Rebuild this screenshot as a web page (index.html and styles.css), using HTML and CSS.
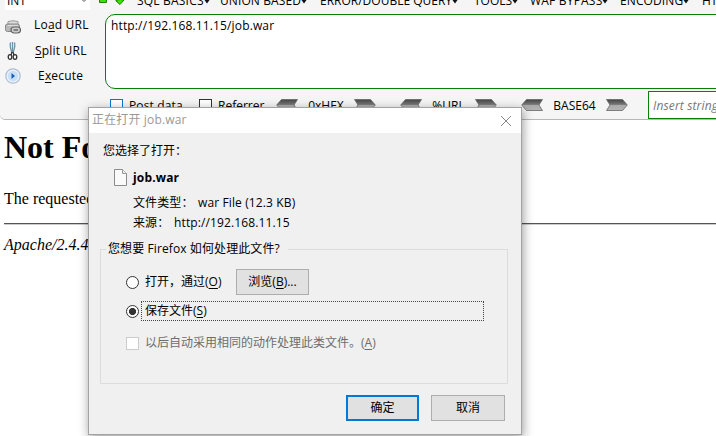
FILE: index.html
```html
<!DOCTYPE html>
<html lang="zh-CN">
<head>
<meta charset="utf-8">
<title>job.war</title>
<link rel="stylesheet" href="styles.css">
</head>
<body>
<svg class="defs" width="0" height="0" aria-hidden="true">
  <defs>
    <linearGradient id="steel" x1="0" y1="0" x2="0" y2="1">
      <stop offset="0" stop-color="#444"/><stop offset=".45" stop-color="#777"/><stop offset=".5" stop-color="#aaa"/><stop offset="1" stop-color="#b5b5b5"/>
    </linearGradient>
    <symbol id="left" viewBox="0 0 22 12"><path d="M.7 6 5.500.5H21.500L18 6l3.500 5.500H5.500z" fill="url(#steel)" stroke="#666" stroke-width=".8"/></symbol>
    <symbol id="right" viewBox="0 0 22 12"><path d="M21.300 6 16.500.5H.5L4 6 .5 11.500H16.500z" fill="url(#steel)" stroke="#666" stroke-width=".8"/></symbol>
    <symbol id="drop" viewBox="0 0 6 4"><path d="M.5 0H5.500L3 3.500z" fill="#111"/></symbol>
  </defs>
</svg>
<header class="hackbar">
  <nav class="menus">
    <div class="select"><span>INT</span><svg width="6" height="4" viewBox="0 0 6 4"><path d="M1 -.5 3 1.500 5 -.5" fill="none" stroke="#555"/></svg></div>
    <svg class="greens" width="30" height="8" viewBox="0 0 30 8"><path d="M1.500-2H8.500V2.500H1.500z" fill="#3be000" stroke="#267d09"/><path d="M20.500-2H24V0H26L22 4.500 18 1V0H20.500z" fill="#3be000" stroke="#267d09"/></svg>
    <span class="menu m1">SQL BASICS<svg><use href="#drop"/></svg></span>
    <span class="menu m2">UNION BASED<svg><use href="#drop"/></svg></span>
    <span class="menu m3">ERROR/DOUBLE QUERY<svg><use href="#drop"/></svg></span>
    <span class="menu m4">TOOLS<svg><use href="#drop"/></svg></span>
    <span class="menu m5">WAF BYPASS<svg><use href="#drop"/></svg></span>
    <span class="menu m6">ENCODING<svg><use href="#drop"/></svg></span>
    <span class="menu m7">HTML</span>
  </nav>
  <div class="work">
    <div class="actions">
      <div class="action">
        <svg width="16" height="16" viewBox="0 0 16 16"><path d="M3 7V3.500Q8 2 13 3.500V7" fill="#ddd" stroke="#999"/><rect x=".5" y="6" width="14" height="7.500" rx="2" fill="#b9b9b9" stroke="#888"/><path d="M3 7.500H13" stroke="#ddd"/><rect x="6" y="9" width="9.500" height="6" rx="3" fill="#ccc" stroke="#666" stroke-width="1.200"/><path d="M8.500 12h4.500" stroke="#666" stroke-width="1.400"/></svg>
        <span class="load">Lo<u>a</u>d URL</span>
      </div>
      <div class="action">
        <svg width="16" height="20" viewBox="0 0 16 20"><path d="M5.500 1.500Q4.500 6 7 11.500M7.500 1V11M9.500 1.500Q10.500 6 8 11.500" fill="none" stroke="#6994a5" stroke-width="1.300"/><g fill="none" stroke="#333" stroke-width="1.300"><path d="M7 11 6 14M8 11 9 14"/><ellipse cx="5" cy="16" rx="1.800" ry="2.300"/><ellipse cx="10" cy="16" rx="1.800" ry="2.300"/></g></svg>
        <span class="split"><u>S</u>plit URL</span>
      </div>
      <div class="action">
        <svg width="16" height="16" viewBox="0 0 16 16"><circle cx="8" cy="8" r="7.200" fill="#eaf2fc" stroke="#b0bfd5" stroke-width="1.300"/><circle cx="8" cy="8" r="5.200" fill="#c9dff7"/><path d="M6.500 5 10 8 6.500 11z" fill="#165fb8"/></svg>
        <span class="execute">E<u>x</u>ecute</span>
      </div>
    </div>
    <div class="url"><span>http://192.168.11.15/job.war</span></div>
  </div>
  <div class="tools">
    <i class="box blue"></i><span class="post">Post data</span>
    <i class="box"></i><span class="referrer">Referrer</span>
    <svg class="arrow first"><use href="#left"/></svg><span class="hex">0xHEX</span><svg class="arrow"><use href="#right"/></svg>
    <svg class="arrow second"><use href="#left"/></svg><span class="pct">%URL</span><svg class="arrow"><use href="#right"/></svg>
    <svg class="arrow third"><use href="#left"/></svg><span class="base">BASE64</span><svg class="arrow"><use href="#right"/></svg>
    <div class="insert">Insert string</div>
  </div>
</header>
<main class="page">
  <h1>Not Found</h1>
  <p>The requested URL</p>
  <hr>
  <address>Apache/2.4.4</address>
</main>
<section class="dialog">
  <div class="titlebar"><span>正在打开 job.war</span><svg width="12" height="12" viewBox="0 0 12 12"><path d="M1 1 11 11M11 1 1 11" stroke="#888" fill="none"/></svg></div>
  <div class="body">
    <div class="chosen">您选择了打开：</div>
    <div class="file"><svg width="13" height="17" viewBox="0 0 13 17"><path d="M.5 .5H8.500L12.500 4.500V16.500H.5z" fill="#fafafa" stroke="#8c8c8c"/><path d="M8.500 .5V4.500H12.500" fill="#eee" stroke="#999"/></svg><b>job.war</b></div>
    <div class="detail"><span class="type">文件类型：</span><span class="kind">war File (12.3 KB)</span></div>
    <div class="detail"><span class="source">来源：</span><span class="host">http://192.168.11.15</span></div>
    <fieldset>
      <legend>您想要 <span class="ff">Firefox</span> 如何处理此文件?</legend>
      <div class="option open"><i class="radio"></i><span class="label">打开，通过(<u>O</u>)</span><button class="browse">浏览(<u>B</u>)...</button></div>
      <div class="option save"><i class="radio on"></i><span class="focus">保存文件(<u>S</u>)</span></div>
      <div class="option auto"><i class="check"></i><span class="label">以后自动采用相同的动作处理此类文件。(<u>A</u>)</span></div>
    </fieldset>
    <div class="buttons"><button class="ok">确定</button><button>取消</button></div>
  </div>
</section>
</body>
</html>
```
FILE: styles.css
```css
* { box-sizing: border-box; }
body { margin: 0; width: 716px; height: 436px; overflow: hidden; position: relative; background: #fff; color: #000; font: 12px/16px "Open Sans", "Noto Sans CJK SC", sans-serif; }
.defs { position: absolute; }
svg { display: block; flex: none; }
u { text-underline-offset: 2px; text-decoration-thickness: 1px; }
span { white-space: nowrap; }

.hackbar { height: 120px; background: #f5f5f5; border-bottom: 1px solid #b7b7b7; border-bottom-left-radius: 5px; overflow: hidden; }
.menus { height: 14px; display: flex; align-items: flex-start; overflow: hidden; }
.menus span { margin-top: -7px; }
.select { flex: none; width: 85px; height: 10px; margin-left: 5px; padding: 0 3px 0 2px; display: flex; justify-content: space-between; background: #fff; overflow: hidden; }
.greens { margin: 0 0 0 8px; width: 30px; }
.menu { display: flex; align-items: center; flex: none; }
.menu svg { width: 6px; height: 4px; margin-top: 1px; }
.m1 { width: 83px; margin-left: 9px; letter-spacing: .2px; }
.m2 { width: 100px; letter-spacing: .1px; }
.m3 { width: 154px; }
.m4 { width: 56px; }
.m5 { width: 90px; letter-spacing: .2px; }
.m6 { width: 82px; letter-spacing: .1px; }

.work { height: 75px; display: flex; }
.actions { width: 105px; flex: none; display: flex; flex-direction: column; }
.action { height: 25px; padding-left: 5px; display: flex; align-items: center; }
.action:first-child { height: 24px; }
.action:first-child span { margin-top: -2px; }
.action span { margin-left: 13px; letter-spacing: .2px; }
.action .split { margin-left: 14px; }
.action .execute { margin-left: 17px; }
.url { flex: 1; min-width: 0; margin-right: -10px; border: 1px solid #078007; border-radius: 10px 0 0 10px; background: #fff; padding: 3px 5px; letter-spacing: .14px; }

.tools { height: 30px; display: flex; align-items: center; padding: 2px 0 0 110px; }
.tools > * { flex: none; }
.tools span { margin-top: 1px; }
.box { width: 13px; height: 13px; border: 1px solid #333; background: #fff; }
.box.blue { border-color: #0078d7; }
.post { width: 64px; margin-left: 6px; letter-spacing: .15px; }
.post + .box { margin-left: 6px; }
.referrer { width: 52px; margin-left: 6px; }
.arrow { width: 22px; height: 12px; }
.hex, .pct, .base { text-align: center; }
.hex { width: 56px; }
.pct { width: 53px; }
.base { width: 63px; }
.first { margin-left: 6px; }
.second { margin-left: 24px; }
.third { margin-left: 24px; }
.insert { width: 80px; height: 28px; margin: -1px 0 0 20px; border: 1px solid #078007; background: #fff; padding: 6px 4px; color: #777; font-style: italic; letter-spacing: .15px; white-space: nowrap; }

.page { padding: 0 0 0 4px; font: 16px/18px "Liberation Serif", serif; }
.page h1 { margin: 0; padding-top: 9px; font-size: 32px; line-height: 37px; }
.page p { margin: 24px 0 15px; white-space: nowrap; }
.page hr { margin: 0 0 11px; border: 0; height: 2px; background: linear-gradient(#555 50%, #ccc 50%); }

.dialog { position: absolute; left: 88px; top: 107px; width: 434px; height: 328px; border: 1px solid #a3a3a3; background: #f0f0f0; box-shadow: 1px 3px 10px rgba(0,0,0,.4); }
.titlebar { height: 25px; background: #fff; color: #999; letter-spacing: .15px; display: flex; justify-content: space-between; align-items: center; padding: 0 9px 2px 3px; }
.titlebar svg { margin-top: 2px; }
.body { padding: 10px 16px 0 11px; }
.chosen { height: 17px; margin-left: 3px; }
.file { height: 19px; margin: 8px 0 0 14px; display: flex; align-items: center; }
.file b { margin-left: 6px; letter-spacing: .15px; }
.detail { height: 20px; margin-left: 33px; line-height: 20px; display: flex; letter-spacing: .12px; }
.file + .detail { margin-top: 6px; }
.type { width: 65px; }
.source { width: 41px; }
fieldset { width: 408px; height: 143px; margin: 8px 0 0; padding: 0; border: 1px solid #dcdcdc; min-width: 0; }
legend { height: 16px; margin-left: 5px; padding: 0 8px 0 2px; letter-spacing: .1px; white-space: nowrap; }
.option { display: flex; align-items: center; padding-left: 25px; }
.open { height: 26px; margin-top: 12px; }
.save { height: 20px; margin-top: 6px; }
.auto { height: 20px; margin-top: 12px; color: #6d6d6d; }
.radio, .check { width: 13px; height: 13px; flex: none; background: #fff; border: 1px solid #333; }
.radio { border-radius: 50%; }
.on { background: radial-gradient(circle, #333 3.2px, #fff 3.900px); }
.check { border-color: #ccc; }
.label { margin-left: 6px; }
.focus { width: 343px; height: 20px; margin-left: 2px; padding-left: 3px; border: 1px dotted #444; line-height: 18px; }
button { font: inherit; color: #000; background: #e1e1e1; border: 1px solid #adadad; border-radius: 0; padding: 0; width: 74px; height: 26px; }
.open .label { width: 91px; margin-right: 0; padding-right: 0; }
.browse { width: 73px; margin-left: 0; }
.buttons { display: flex; gap: 12px; margin: 11px 0 0 246px; }
.buttons .ok { width: 73px; border: 2px solid #0078d7; }
```
